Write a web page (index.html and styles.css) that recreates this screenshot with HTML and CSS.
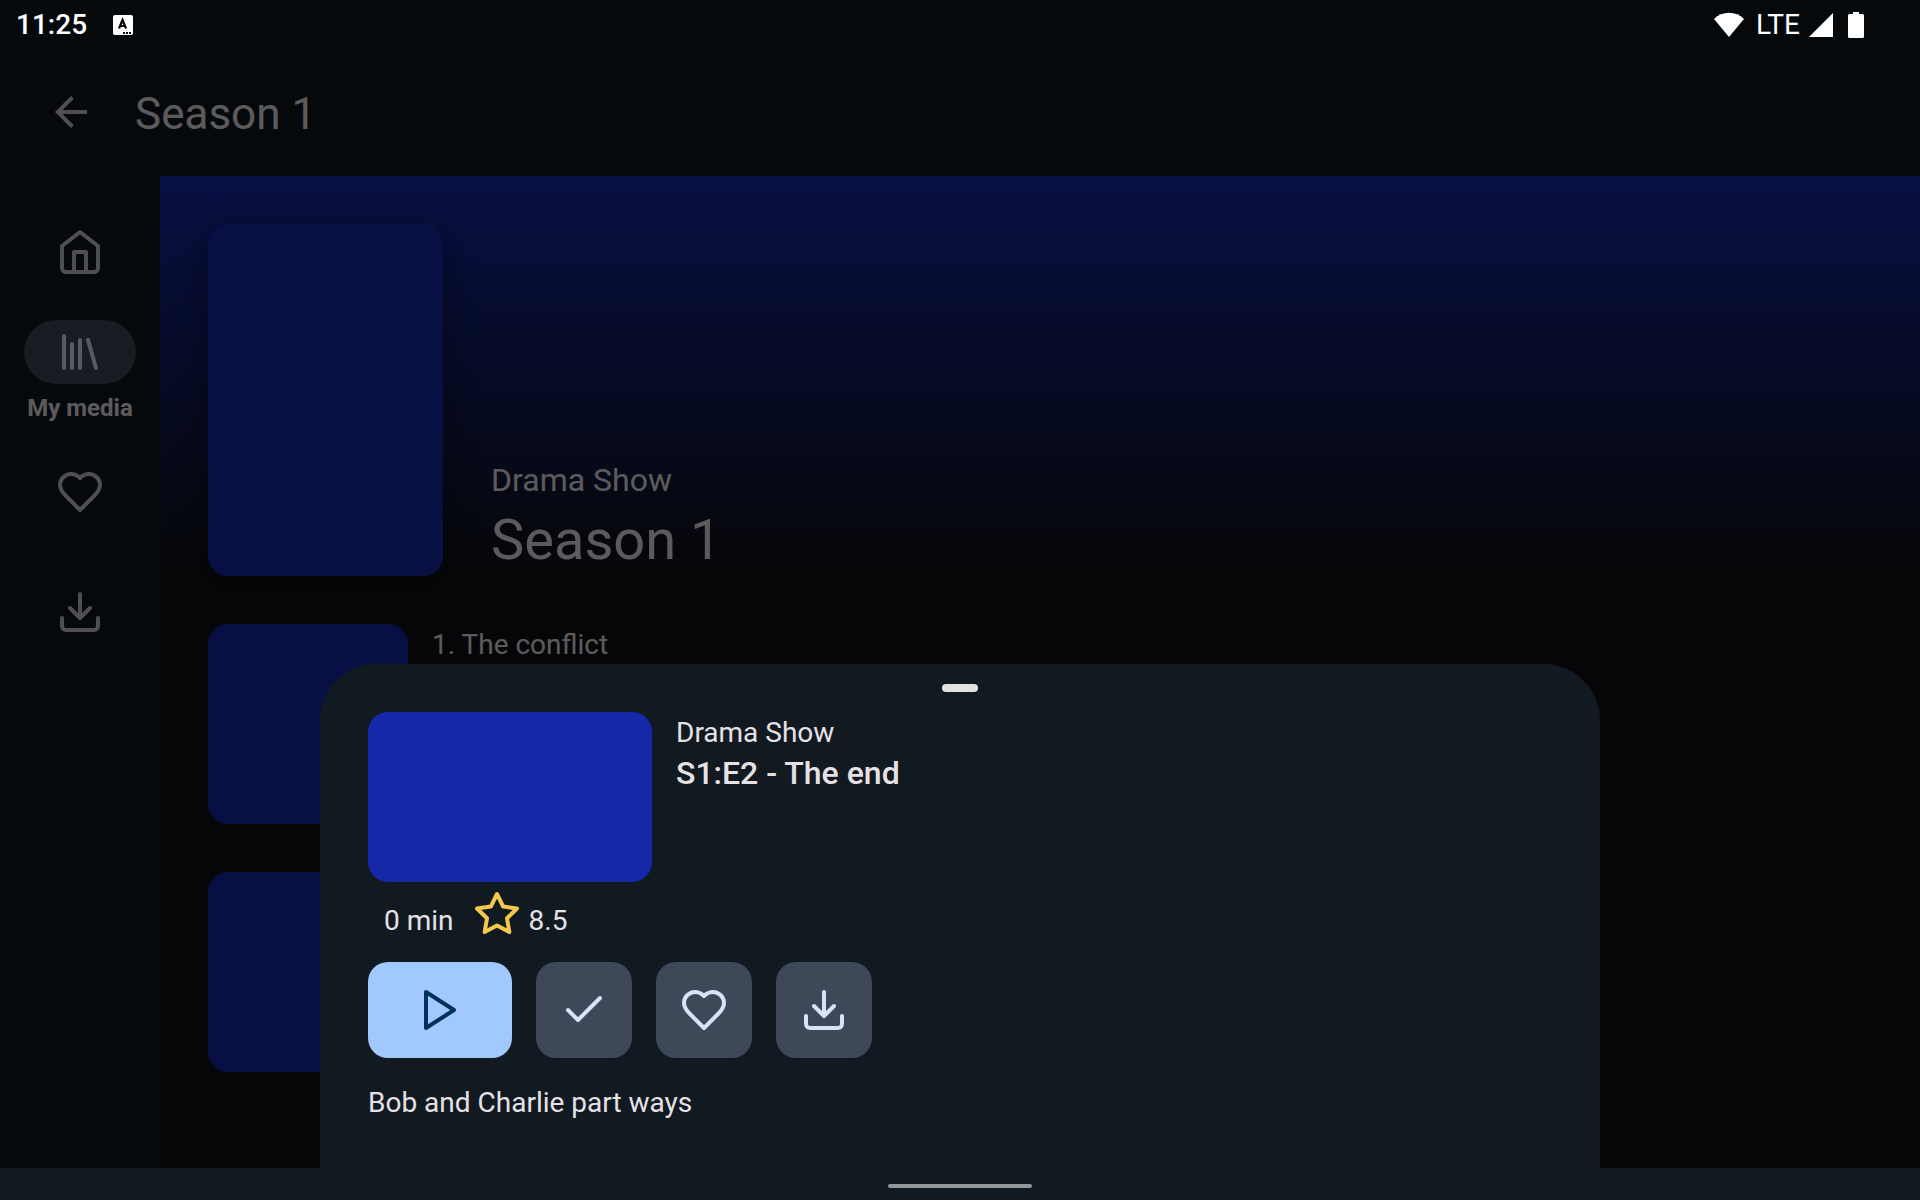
FILE: index.html
```html
<!DOCTYPE html>
<html lang="en">
<head>
<meta charset="utf-8">
<meta name="viewport" content="width=device-width, initial-scale=1">
<title>Season 1</title>
<link rel="stylesheet" href="styles.css">
</head>
<body>
<svg class="sprite" aria-hidden="true">
  <symbol id="i-home" viewBox="0 0 24 24"><path d="M3 9l9-7 9 7v11a2 2 0 0 1-2 2H5a2 2 0 0 1-2-2z"/><path d="M9 22V12h6v10"/></symbol>
  <symbol id="i-library" viewBox="0 0 24 24"><path d="M16 6l4 14M12 6v14M8 8v12M4 4v16"/></symbol>
  <symbol id="i-heart" viewBox="0 0 24 24"><path d="M19 14c1.49-1.46 3-3.21 3-5.5A5.5 5.5 0 0 0 16.500 3c-1.760 0-3 .5-4.500 2-1.500-1.500-2.740-2-4.500-2A5.500 5.500 0 0 0 2 8.500c0 2.290 1.510 4.040 3 5.500l7 7z"/></symbol>
  <symbol id="i-download" viewBox="0 0 24 24"><path d="M21 15v4a2 2 0 0 1-2 2H5a2 2 0 0 1-2-2v-4M7 10l5 5 5-5M12 15V3"/></symbol>
  <symbol id="i-star" viewBox="0 0 24 24"><path d="M12 2l3.090 6.260L22 9.270l-5 4.870 1.180 6.880L12 17.770l-6.180 3.250L7 14.140 2 9.270l6.910-1.010z"/></symbol>
  <symbol id="i-play" viewBox="0 0 24 24"><path d="M5 3l14 9-14 9z"/></symbol>
  <symbol id="i-check" viewBox="0 0 24 24"><path d="M20 6L9 17l-5-5"/></symbol>
</svg>

<header class="status-bar">
  <span class="clock">11:25</span>
  <svg class="notice" viewBox="0 0 20 20" aria-hidden="true">
    <rect width="20" height="20" rx="2" fill="#fff"/>
    <path d="M6 13.500L9.500 5l3.500 8.500M7.500 11h4" fill="none" stroke="#05090b" stroke-width="2.200"/>
    <path d="M10 17h2v2h-2zM13 17h2v2h-2zM16 17h2v2h-2z" fill="#05090b"/>
  </svg>
  <div class="signals">
    <svg class="wifi" viewBox="0 0 30 26" aria-hidden="true"><path d="M0 7C8-1.500 22-1.500 30 7L15 25z"/></svg>
    <span class="network">LTE</span>
    <svg class="cell" viewBox="0 0 26 26" aria-hidden="true"><path d="M25 1v24H1z"/></svg>
    <svg class="battery" viewBox="0 0 16 26" aria-hidden="true"><path d="M5 0h6v2h3.500q1.500 0 1.500 1.500v21q0 1.500-1.500 1.500h-13Q0 26 0 24.500v-21Q0 2 1.500 2H5z"/></svg>
  </div>
</header>

<div class="app">
  <div class="top-bar">
    <button class="back" type="button" aria-label="Back">
      <svg viewBox="0 0 24 24" aria-hidden="true"><path d="M20 11H7.830l5.590-5.590L12 4l-8 8 8 8 1.410-1.410L7.830 13H20z"/></svg>
    </button>
    <span class="top-title">Season 1</span>
  </div>
  <div class="body">
    <nav class="rail">
      <a class="rail-item" href="#home" aria-label="Home"><span class="pill"><svg class="icon"><use href="#i-home"/></svg></span></a>
      <a class="rail-item active" href="#media"><span class="pill"><svg class="icon"><use href="#i-library"/></svg></span><span class="rail-label">My media</span></a>
      <a class="rail-item" href="#favorites" aria-label="Favorites"><span class="pill"><svg class="icon"><use href="#i-heart"/></svg></span></a>
      <a class="rail-item" href="#downloads" aria-label="Downloads"><span class="pill"><svg class="icon"><use href="#i-download"/></svg></span></a>
    </nav>
    <main class="content">
      <section class="hero">
        <div class="poster"></div>
        <div class="hero-text">
          <p class="show">Drama Show</p>
          <h1>Season 1</h1>
        </div>
      </section>
      <ul class="episodes">
        <li><div class="thumb"></div><span>1. The conflict</span></li>
        <li><div class="thumb"></div></li>
      </ul>
    </main>
  </div>
</div>

<div class="scrim">
  <section class="sheet" role="dialog" aria-label="Episode details">
    <div class="handle"></div>
    <div class="summary">
      <div class="still"></div>
      <div>
        <p class="sheet-show">Drama Show</p>
        <h2>S1:E2 - The end</h2>
      </div>
    </div>
    <div class="meta">
      <span>0 min</span>
      <span class="rating"><svg class="icon star"><use href="#i-star"/></svg>8.5</span>
    </div>
    <div class="actions">
      <button class="action play" type="button" aria-label="Play"><svg class="icon"><use href="#i-play"/></svg></button>
      <button class="action" type="button" aria-label="Mark as watched"><svg class="icon"><use href="#i-check"/></svg></button>
      <button class="action" type="button" aria-label="Favorite"><svg class="icon"><use href="#i-heart"/></svg></button>
      <button class="action" type="button" aria-label="Download"><svg class="icon"><use href="#i-download"/></svg></button>
    </div>
    <p class="overview">Bob and Charlie part ways</p>
  </section>
</div>

<footer class="gesture-bar"><div class="gesture"></div></footer>
</body>
</html>
```
FILE: styles.css
```css
* { box-sizing: border-box; }

:root {
  --surface: #0f171d;
  --background: #0f1114;
  --sheet: #121a21;
  --art: #1428a8;
  --tonal: #3e4859;
  --on-surface: #e6e1e5;
  --radius: 20px;
}

body {
  position: relative;
  display: flex;
  flex-direction: column;
  min-height: 100vh;
  margin: 0;
  background: var(--surface);
  color: var(--on-surface);
  font: 400 28px/42px Roboto, "Noto Sans", sans-serif;
}

p, h1, h2, ul { margin: 0; padding: 0; }
ul { list-style: none; }
button { border: 0; padding: 0; background: none; color: inherit; }
.sprite { display: none; }

.icon {
  display: block;
  width: 48px;
  height: 48px;
  fill: none;
  stroke: currentColor;
  stroke-width: 2;
  stroke-linecap: round;
  stroke-linejoin: round;
}

/* Status bar */
.status-bar {
  position: relative;
  z-index: 2;
  display: flex;
  align-items: center;
  height: 48px;
  padding: 2px 56px 0 16px;
  color: #fff;
  font-weight: 500;
}
.notice { width: 20px; height: 20px; margin-left: 26px; }
.signals {
  display: flex;
  align-items: center;
  margin-left: auto;
  fill: #fff;
}
.network { font-weight: 400; }
.wifi { width: 30px; height: 26px; margin-right: 12px; }
.cell { width: 26px; height: 26px; margin: 0 14px 0 8px; }
.battery { width: 16px; height: 26px; }

/* App */
.app { display: flex; flex: 1; flex-direction: column; }
.top-bar {
  display: flex;
  align-items: center;
  gap: 40px;
  height: 128px;
  padding-left: 47px;
}
.back svg { display: block; width: 48px; height: 48px; fill: #cac4d0; }
.top-title { padding-top: 4px; font-size: 44px; line-height: 56px; }

.body { display: flex; flex: 1; }

.rail {
  display: flex;
  flex-direction: column;
  flex: none;
  width: 160px;
  padding-top: 16px;
}
.rail-item {
  display: flex;
  flex-direction: column;
  align-items: center;
  justify-content: center;
  gap: 8px;
  height: 120px;
  color: #cac4d0;
  text-decoration: none;
}
.pill {
  display: flex;
  align-items: center;
  justify-content: center;
  width: 112px;
  height: 64px;
  border-radius: 32px;
}
.active .pill { background: var(--tonal); color: #dae2f9; }
.rail-label {
  color: var(--on-surface);
  font-size: 24px;
  font-weight: 700;
  line-height: 32px;
}

.content { flex: 1; background: var(--background); }
.hero {
  display: flex;
  gap: 48px;
  align-items: flex-end;
  padding: 48px 48px 0;
  background: linear-gradient(var(--art), var(--background));
}
.poster {
  width: 235px;
  height: 352px;
  border-radius: var(--radius);
  background: var(--art);
  box-shadow: 0 8px 32px rgba(0, 0, 0, 0.4);
}
.show { font-size: 32px; line-height: 48px; }
h1 { font-size: 56px; font-weight: 400; line-height: 72px; }

.episodes {
  display: flex;
  flex-direction: column;
  gap: 48px;
  padding: 48px 48px 0;
}
.episodes li { display: flex; gap: 24px; }
.thumb {
  width: 200px;
  height: 200px;
  border-radius: var(--radius);
  background: var(--art);
}

/* Modal sheet over the dimmed app */
.scrim {
  position: absolute;
  inset: 0 0 32px;
  display: flex;
  align-items: flex-end;
  justify-content: center;
  background: rgba(0, 0, 0, 0.6);
}
.sheet {
  width: 100%;
  max-width: 1280px;
  padding: 20px 48px 44px;
  border-radius: 56px 56px 0 0;
  background: var(--sheet);
}
.handle {
  width: 36px;
  height: 8px;
  margin: 0 auto 20px;
  border-radius: 4px;
  background: var(--on-surface);
}
.summary { display: flex; gap: 24px; }
.still {
  width: 284px;
  height: 170px;
  border-radius: var(--radius);
  background: var(--art);
}
h2 { font-size: 32px; font-weight: 500; line-height: 38px; }

.meta {
  display: flex;
  align-items: flex-end;
  gap: 19px;
  padding: 8px 16px 24px;
  line-height: 34px;
}
.rating { display: flex; align-items: flex-end; gap: 8px; }
.star { color: #f2c94c; }

.actions { display: flex; gap: 24px; margin-bottom: 24px; }
.action {
  display: flex;
  align-items: center;
  justify-content: center;
  width: 96px;
  height: 96px;
  border-radius: var(--radius);
  background: var(--tonal);
  color: #dae2f9;
}
.play { width: 144px; background: #a2c9ff; color: #00315b; }

/* System gesture area */
.gesture-bar {
  display: flex;
  align-items: center;
  justify-content: center;
  height: 32px;
  padding-top: 4px;
  background: var(--sheet);
}
.gesture {
  width: 144px;
  height: 4px;
  border-radius: 2px;
  background: #94989b;
}
```
